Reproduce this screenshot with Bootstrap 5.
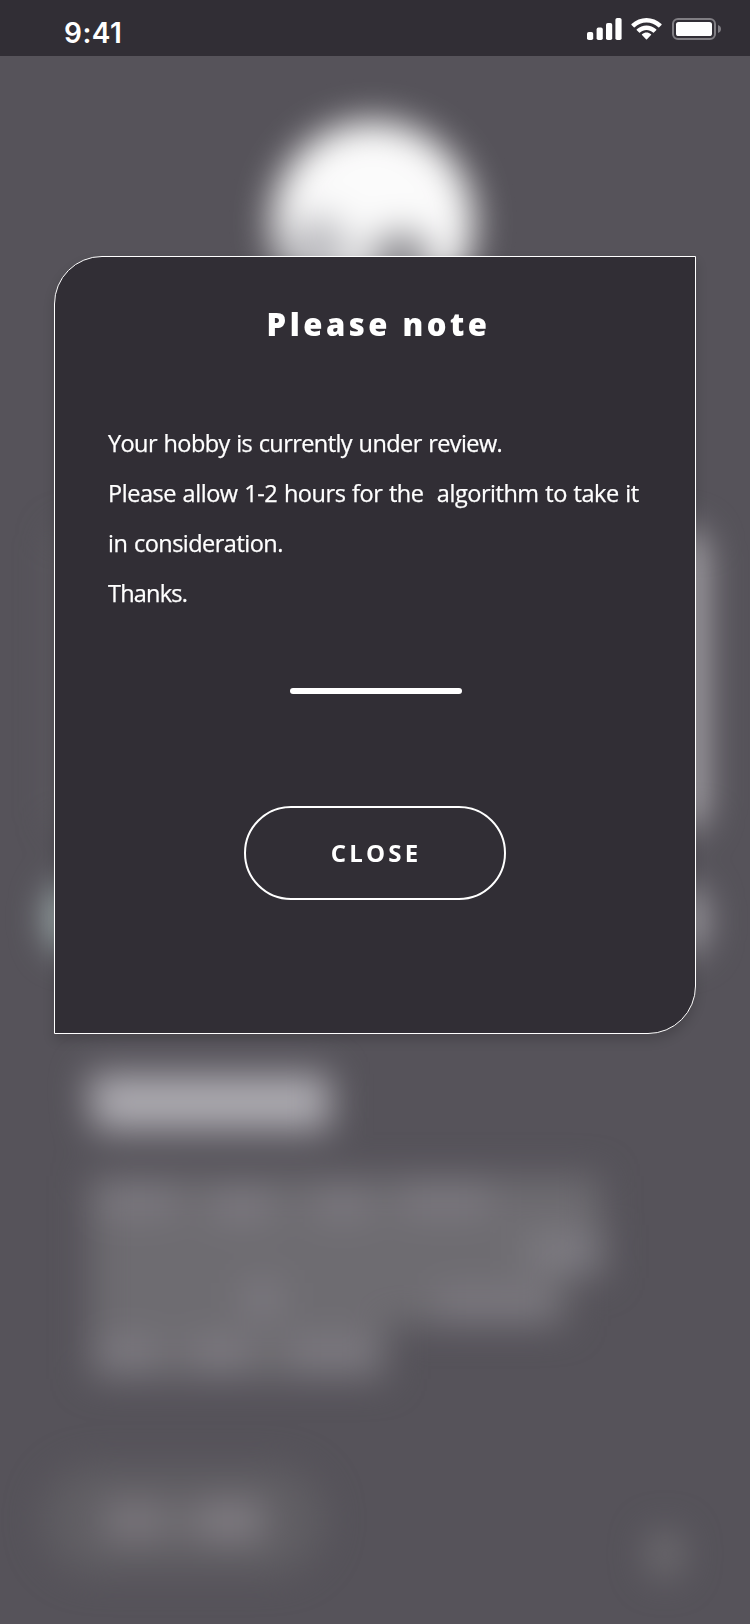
<!DOCTYPE html>
<html lang="en">
<head>
<meta charset="utf-8">
<meta name="viewport" content="width=device-width, initial-scale=1">
<title>Please note</title>
<link href="https://cdn.jsdelivr.net/npm/bootstrap@5.3.0/dist/css/bootstrap.min.css" rel="stylesheet">
<style>
  body { background: #56535a; color: #fff; font-family: "Open Sans", "Noto Sans", sans-serif; }
  .screen { width: 750px; height: 1624px; }
  .status-bar { height: 56px; background: #312e35; padding-left: 64px; }
  .clock { font: 600 28px/34px "Inter", sans-serif; letter-spacing: .5px; padding-top: 16px; }
  .notice { width: 642px; height: 778px; margin: 200px 0 0 54px; padding: 0 53px; background: #312e35;
    border: 1px solid #fff; border-radius: 48px 0 48px 0; box-shadow: 0 6px 12px rgba(0,0,0,.16); }
  .notice-title { font-size: 31px; line-height: 42px; font-weight: 800; letter-spacing: 3.5px; margin: 46px 0 0 7px; }
  .notice-text { font-size: 23.5px; line-height: 50px; word-spacing: 1px; margin-top: 73px; white-space: pre;
    -webkit-text-stroke: .25px #fff; }
  .line-a { letter-spacing: -.58px; }
  .line-b { letter-spacing: -.46px; }
  .line-c { letter-spacing: -.52px; }
  .line-d { letter-spacing: -.78px; }
  .divider { width: 172px; height: 6px; border-radius: 3px; margin-top: 70px; margin-left: 2px; }
  .btn-close-notice { width: 262px; height: 94px; margin-top: 112px; border: 2px solid #fff; border-radius: 47px;
    color: #fff; font-size: 24px; font-weight: 700; letter-spacing: 3.2px; padding: 0 0 0 2px; }
</style>
</head>
<body>
<main class="screen position-relative overflow-hidden">
  <!-- blurred profile page behind the dialog -->
  <svg class="position-absolute top-0 start-0" width="750" height="1624" aria-hidden="true">
    <defs>
      <filter id="soft" filterUnits="userSpaceOnUse" x="-60" y="-60" width="870" height="1744" color-interpolation-filters="sRGB"><feGaussianBlur stdDeviation="18"/></filter>
    </defs>
    <g filter="url(#soft)">
      <circle cx="373" cy="222" r="101" fill="#fbfbfb"/>
      <ellipse cx="318" cy="256" rx="32" ry="40" fill="#bcbcc0"/>
      <ellipse cx="401" cy="264" rx="32" ry="32" fill="#8a898e"/>
      <rect x="55" y="530" width="100" height="300" rx="14" fill="#5e5c61"/>
      <rect x="600" y="530" width="105" height="300" rx="22" fill="#b0adb2"/>
      <rect x="48" y="884" width="90" height="68" rx="26" fill="#a8b9b8"/>
      <rect x="640" y="886" width="65" height="68" rx="24" fill="#a3a1a7"/>
      <path d="M88 1074H330V1130H94Z" fill="#adabb1"/>
      <path d="M90 1176H600V1278H567V1325H387V1379H90Z" fill="#6e6c71"/>
      <rect x="505" y="1225" width="100" height="53" fill="#706e73"/>
      <g fill="#94919a" opacity=".4">
        <rect x="96" y="1185" width="80" height="30"/><rect x="212" y="1190" width="60" height="30"/>
        <rect x="315" y="1190" width="55" height="28"/><rect x="400" y="1184" width="90" height="30"/>
        <rect x="530" y="1234" width="65" height="36"/><rect x="242" y="1282" width="40" height="34"/>
        <rect x="435" y="1290" width="115" height="30"/><rect x="98" y="1338" width="60" height="32"/>
        <rect x="190" y="1338" width="60" height="32"/><rect x="290" y="1338" width="85" height="32"/>
      </g>
      <rect x="43" y="1466" width="282" height="108" rx="54" fill="#605e63"/>
      <rect x="104" y="1501" width="64" height="40" fill="#7a767c"/>
      <rect x="160" y="1506" width="46" height="32" fill="#6f6c71"/>
      <rect x="198" y="1501" width="66" height="40" fill="#807c82"/>
      <ellipse cx="665" cy="1554" rx="18" ry="24" fill="#706e72"/>
    </g>
  </svg>

  <div class="position-relative">
    <header class="status-bar d-flex align-items-start">
      <span class="clock">9:41</span>
      <svg class="ms-auto" width="163" height="56" viewBox="587 0 163 56" aria-hidden="true">
        <g fill="#fff">
          <rect x="587" y="32" width="6.2" height="8" rx="1.8"/>
          <rect x="596.6" y="27.6" width="6.2" height="12.4" rx="1.8"/>
          <rect x="606" y="23" width="6.2" height="17" rx="1.8"/>
          <rect x="615.4" y="18" width="6.2" height="22" rx="1.8"/>
          <path d="M646.5 22.500C650.900 22.500 655.100 24.200 658.300 27.200Q658.800 27.600 659.200 27.200L661.500 24.900Q661.900 24.400 661.500 24C653.100 16 639.900 16 631.500 24Q631.100 24.400 631.500 24.900L633.800 27.200Q634.200 27.600 634.700 27.200C637.900 24.200 642.100 22.500 646.500 22.500Z"/>
          <path d="M646.500 30C648.900 30 651.200 30.900 653 32.500Q653.500 32.900 653.900 32.500L656.200 30.200Q656.700 29.700 656.200 29.200C650.700 24.100 642.300 24.100 636.800 29.200Q636.300 29.700 636.800 30.200L639.100 32.500Q639.500 32.900 640 32.500C641.800 30.900 644.100 30 646.500 30Z"/>
          <path d="M651 35.100Q651.500 34.700 651 34.200C648.400 32 644.600 32 642 34.200Q641.500 34.700 642 35.100L646 39.300Q646.500 39.800 647 39.300Z"/>
          <rect x="676" y="22" width="36" height="14" rx="2.600"/>
        </g>
        <rect x="673" y="19" width="42" height="20" rx="5" fill="none" stroke="#807e83" stroke-width="2"/>
        <path d="M718 25V33C720 32.300 721 30.800 721 29S720 25.700 718 25Z" fill="#807e83"/>
      </svg>
    </header>

    <section class="notice d-flex flex-column align-items-center" role="dialog" aria-labelledby="notice-title">
      <h1 class="notice-title" id="notice-title">Please note</h1>
      <p class="notice-text align-self-start mb-0"><span class="line-a">Your hobby is currently under review.</span>
<span class="line-b">Please allow 1-2 hours for the  algorithm to take it</span>
<span class="line-c">in consideration.</span>
<span class="line-d">Thanks.</span></p>
      <div class="divider bg-white"></div>
      <button type="button" class="btn btn-close-notice">CLOSE</button>
    </section>
  </div>
</main>
<script src="https://cdn.jsdelivr.net/npm/bootstrap@5.3.0/dist/js/bootstrap.bundle.min.js"></script>
</body>
</html>
